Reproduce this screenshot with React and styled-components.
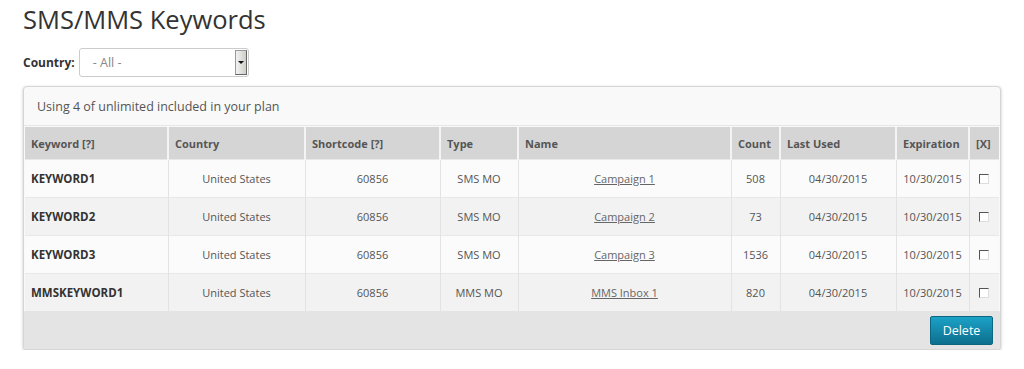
import React from "react";
import styled, { createGlobalStyle } from "styled-components";

const GlobalStyle = createGlobalStyle`
  body {
    margin: 0;
    background: #fff;
    font-family: "Open Sans", "DejaVu Sans", sans-serif;
    color: #444;
  }
`;

const Page = styled.div`
  padding: 0 23px;
`;

const Title = styled.h1`
  margin: 0;
  padding-top: 3px;
  font-size: 25.5px;
  font-weight: 400;
  line-height: 32px;
  color: #333;
`;

const FilterRow = styled.div`
  display: flex;
  align-items: center;
  gap: 4px;
  margin-top: 12px;
  height: 30px;
`;

const Label = styled.label`
  font-size: 12px;
  font-weight: 700;
  color: #333;
`;

const Select = styled.div`
  display: flex;
  align-items: center;
  justify-content: space-between;
  width: 170px;
  height: 29px;
  box-sizing: border-box;
  border: 1px solid #ccc;
  border-radius: 3px;
  background: #fff;
  padding: 0 1px 0 13px;
  font-size: 12.5px;
  color: #888;
`;

const Arrow = styled.span`
  display: flex;
  align-items: center;
  justify-content: center;
  width: 12px;
  height: 25px;
  box-sizing: border-box;
  border: 1px solid #999;
  border-right-color: #666;
  border-bottom-color: #666;
  background: linear-gradient(to right, #f2f2f2, #cfcfc8);
  &::after {
    content: "";
    border-left: 3px solid transparent;
    border-right: 3px solid transparent;
    border-top: 3px solid #111;
  }
`;

const Panel = styled.div`
  margin-top: 9px;
  width: 978px;
  box-sizing: border-box;
  border: 1px solid #d6d6d6;
  border-radius: 4px;
  background: #f9f9f9;
  box-shadow: 0 1px 3px rgba(0, 0, 0, 0.25);
  overflow: hidden;
`;

const PanelHeader = styled.div`
  height: 38px;
  padding: 0 13px;
  display: flex;
  align-items: center;
  font-size: 12.5px;
  color: #555;
  border-bottom: 1px solid #e6e6e6;
`;

const Table = styled.table`
  width: 974px;
  margin: 1px 1px 0;
  border-collapse: collapse;
  table-layout: fixed;
  font-size: 11px;
`;

const Th = styled.th`
  height: 32px;
  padding: 0 6px;
  text-align: left;
  font-weight: 700;
  font-size: 11px;
  color: #555;
  background: #d5d5d5;
  border-left: 2px solid #f4f4f4;
  &:first-child {
    border-left: none;
  }
`;

const Row = styled.tr`
  background: ${(p) => (p.$alt ? "#f2f2f2" : "#fbfbfb")};
  border-top: 1px solid #e8e8e8;
`;

const Td = styled.td`
  height: 37px;
  padding: 0 6px;
  text-align: ${(p) => (p.$left ? "left" : "center")};
  font-weight: ${(p) => (p.$bold ? 700 : 400)};
  font-size: ${(p) => (p.$bold ? "11.5px" : "11px")};
  color: ${(p) => (p.$bold ? "#333" : "#555")};
  border-left: 1px solid #e3e3e3;
  &:first-child {
    border-left: none;
  }
`;

const Link = styled.a`
  color: #666;
  text-decoration: underline;
  cursor: pointer;
`;

const Check = styled.span`
  display: inline-block;
  width: 10px;
  height: 10px;
  box-sizing: border-box;
  border: 1px solid;
  border-color: #555 #ddd #ddd #555;
  background: #fff;
  vertical-align: -1px;
`;

const Footer = styled.div`
  display: flex;
  justify-content: flex-end;
  align-items: center;
  height: 38px;
  padding: 0 7px;
  background: #e4e4e4;
`;

const Button = styled.button`
  width: 63px;
  height: 29px;
  border: 1px solid #0c6682;
  border-radius: 2px;
  background: linear-gradient(to bottom, #1ba1c7, #0e6f8e);
  color: #fff;
  font-family: "Open Sans", sans-serif;
  font-size: 12.5px;
  cursor: pointer;
`;

const columns = [
  { label: "Keyword [?]", width: 143 },
  { label: "Country", width: 137 },
  { label: "Shortcode [?]", width: 135 },
  { label: "Type", width: 78 },
  { label: "Name", width: 213 },
  { label: "Count", width: 49 },
  { label: "Last Used", width: 116 },
  { label: "Expiration", width: 73 },
  { label: "[X]", width: 30 },
];

const keywords = [
  { keyword: "KEYWORD1", type: "SMS MO", name: "Campaign 1", count: 508 },
  { keyword: "KEYWORD2", type: "SMS MO", name: "Campaign 2", count: 73 },
  { keyword: "KEYWORD3", type: "SMS MO", name: "Campaign 3", count: 1536 },
  { keyword: "MMSKEYWORD1", type: "MMS MO", name: "MMS Inbox 1", count: 820 },
];

export default function App() {
  return (
    <>
      <GlobalStyle />
      <Page>
        <Title>SMS/MMS Keywords</Title>
        <FilterRow>
          <Label>Country:</Label>
          <Select>
            - All -
            <Arrow />
          </Select>
        </FilterRow>
        <Panel>
          <PanelHeader>Using 4 of unlimited included in your plan</PanelHeader>
          <Table>
            <colgroup>
              {columns.map((c) => (
                <col key={c.label} style={{ width: c.width }} />
              ))}
            </colgroup>
            <thead>
              <tr>
                {columns.map((c) => (
                  <Th key={c.label}>{c.label}</Th>
                ))}
              </tr>
            </thead>
            <tbody>
              {keywords.map((k, i) => (
                <Row key={k.keyword} $alt={i % 2 === 1}>
                  <Td $left $bold>
                    {k.keyword}
                  </Td>
                  <Td>United States</Td>
                  <Td>60856</Td>
                  <Td>{k.type}</Td>
                  <Td>
                    <Link>{k.name}</Link>
                  </Td>
                  <Td>{k.count}</Td>
                  <Td>04/30/2015</Td>
                  <Td>10/30/2015</Td>
                  <Td>
                    <Check />
                  </Td>
                </Row>
              ))}
            </tbody>
          </Table>
          <Footer>
            <Button>Delete</Button>
          </Footer>
        </Panel>
      </Page>
    </>
  );
}
